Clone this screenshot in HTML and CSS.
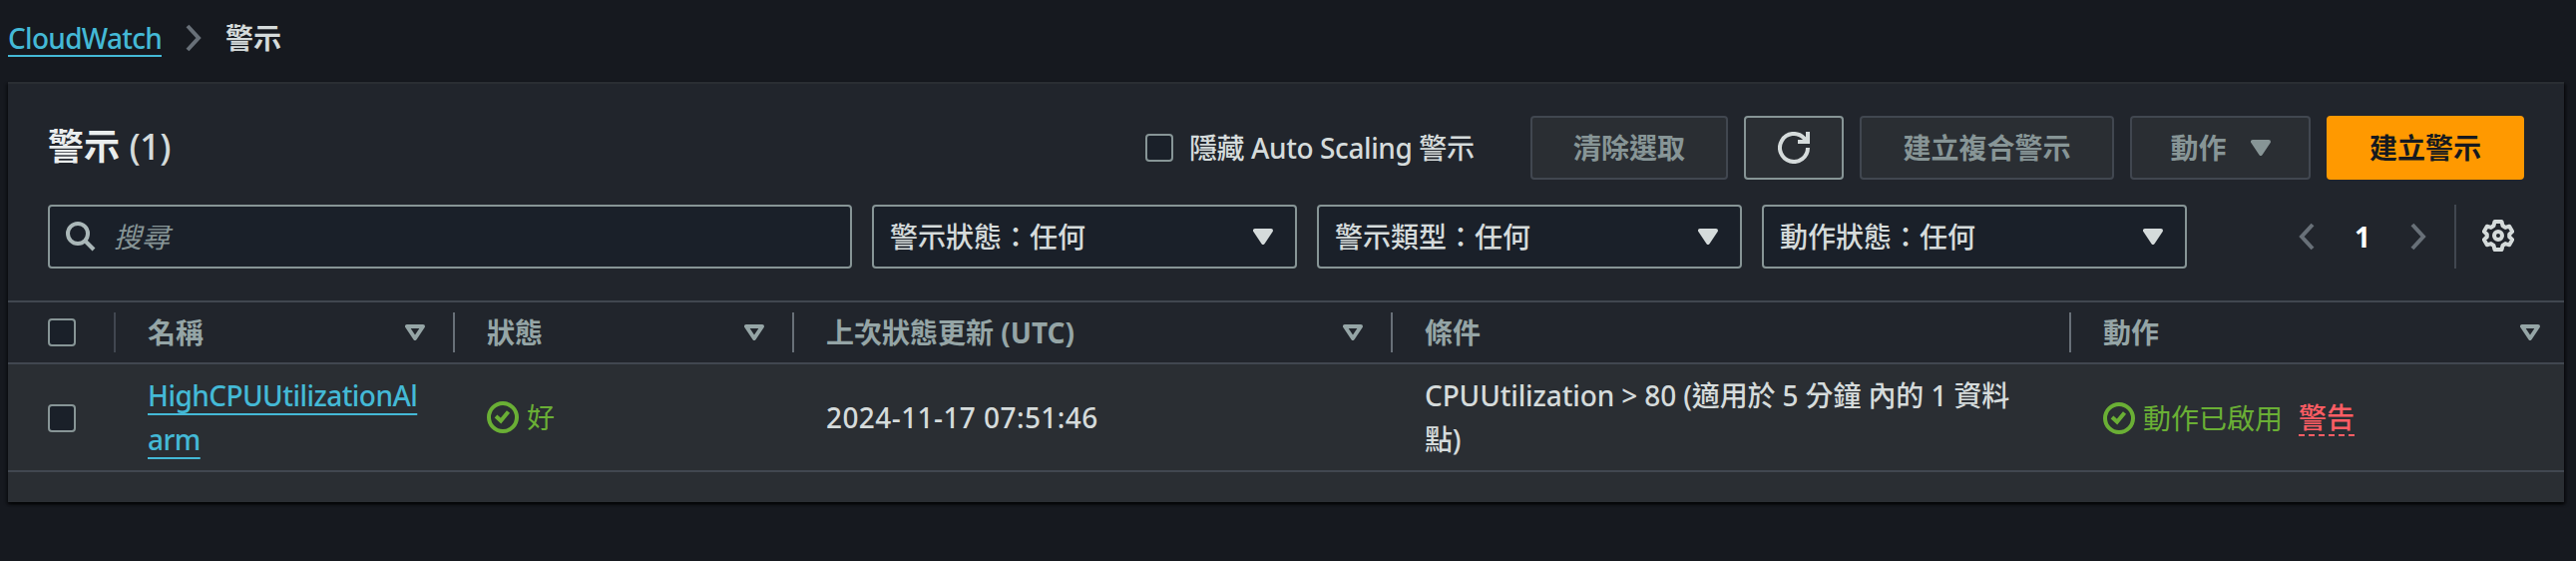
FILE: index.html
```html
<!DOCTYPE html>
<html lang="zh-Hant">
<head>
<meta charset="utf-8">
<title>CloudWatch 警示</title>
<link rel="stylesheet" href="styles.css">
</head>
<body>
<nav class="breadcrumb">
  <a class="link crumb-link">CloudWatch</a>
  <svg class="crumb-sep" width="16" height="28" viewBox="0 0 16 28"><path d="M2 2l11 12L2 26" fill="none" stroke="currentColor" stroke-width="4"/></svg>
  <span class="crumb-current">警示</span>
</nav>
<main class="panel">
  <header class="panel-head">
    <h1 class="title">警示 <span class="count">(1)</span></h1>
    <label class="hide-option"><span class="checkbox"></span><span class="hide-text">隱藏 Auto Scaling 警示</span></label>
    <div class="actions">
      <button class="btn disabled clear">清除選取</button>
      <button class="btn refresh" aria-label="重新整理"><svg width="32" height="32" viewBox="0 0 32 32" fill="none" stroke="currentColor" stroke-width="4"><path d="M30 16A14 14 0 1 1 26 6.200l3.500 3.800"/><path d="M30 0v10H20" /></svg></button>
      <button class="btn disabled composite">建立複合警示</button>
      <button class="btn disabled menu">動作<svg width="20" height="16" viewBox="0 0 20 16"><path d="M2 2h16l-8 12z" fill="currentColor" stroke="currentColor" stroke-width="4" stroke-linejoin="round"/></svg></button>
      <button class="btn primary">建立警示</button>
    </div>
  </header>
  <div class="filters">
    <div class="field search">
      <svg width="30" height="30" viewBox="0 0 30 30" fill="none" stroke="currentColor" stroke-width="4"><circle cx="12" cy="12" r="10"/><path d="M19 19l9 9"/></svg>
      <span class="placeholder">搜尋</span>
    </div>
    <div class="field select">警示狀態：任何<svg width="20" height="16" viewBox="0 0 20 16"><path d="M2 2h16l-8 12z" fill="currentColor" stroke="currentColor" stroke-width="4" stroke-linejoin="round"/></svg></div>
    <div class="field select">警示類型：任何<svg width="20" height="16" viewBox="0 0 20 16"><path d="M2 2h16l-8 12z" fill="currentColor" stroke="currentColor" stroke-width="4" stroke-linejoin="round"/></svg></div>
    <div class="field select">動作狀態：任何<svg width="20" height="16" viewBox="0 0 20 16"><path d="M2 2h16l-8 12z" fill="currentColor" stroke="currentColor" stroke-width="4" stroke-linejoin="round"/></svg></div>
    <div class="pager">
      <svg class="arrow" width="16" height="28" viewBox="0 0 16 28"><path d="M14 2L3 14l11 12" fill="none" stroke="currentColor" stroke-width="4"/></svg>
      <span class="page">1</span>
      <svg class="arrow" width="16" height="28" viewBox="0 0 16 28"><path d="M2 2l11 12L2 26" fill="none" stroke="currentColor" stroke-width="4"/></svg>
    </div>
    <div class="settings"><svg width="32" height="32" viewBox="0 0 32 32" fill="none" stroke="currentColor" stroke-width="4" stroke-linejoin="round"><path d="M12.500 2h7l1 4 2.700 1.900 4-1.200 3 5.200-3 2.900v2.400l3 2.900-3 5.200-4-1.200-2.700 1.900-1 4h-7l-1-4-2.700-1.900-4 1.200-3-5.200 3-2.900v-2.400l-3-2.900 3-5.200 4 1.200L11.500 6z"/><circle cx="16" cy="16" r="4"/></svg></div>
  </div>
  <table class="alarms">
    <colgroup><col class="c-check"><col class="c-name"><col class="c-state"><col class="c-time"><col class="c-cond"><col class="c-act"></colgroup>
    <thead>
      <tr>
        <th><div class="head first"><span class="checkbox"></span></div></th>
        <th><div class="head">名稱<svg width="20" height="16" viewBox="0 0 20 16"><path d="M2 2h16l-8 12z" fill="none" stroke="currentColor" stroke-width="4" stroke-linejoin="round"/></svg></div></th>
        <th><div class="head">狀態<svg width="20" height="16" viewBox="0 0 20 16"><path d="M2 2h16l-8 12z" fill="none" stroke="currentColor" stroke-width="4" stroke-linejoin="round"/></svg></div></th>
        <th><div class="head">上次狀態更新 (UTC)<svg width="20" height="16" viewBox="0 0 20 16"><path d="M2 2h16l-8 12z" fill="none" stroke="currentColor" stroke-width="4" stroke-linejoin="round"/></svg></div></th>
        <th><div class="head">條件</div></th>
        <th><div class="head last">動作<svg width="20" height="16" viewBox="0 0 20 16"><path d="M2 2h16l-8 12z" fill="none" stroke="currentColor" stroke-width="4" stroke-linejoin="round"/></svg></div></th>
      </tr>
    </thead>
    <tbody>
      <tr>
        <td class="pick"><span class="checkbox"></span></td>
        <td class="name"><a class="link">HighCPUUtilizationAl<br>arm</a></td>
        <td><div class="status"><svg width="32" height="32" viewBox="0 0 32 32" fill="none" stroke="currentColor" stroke-width="4"><circle cx="16" cy="16" r="14"/><path d="M9 15l5 4.500 7.500-9"/></svg><span>好</span></div></td>
        <td class="time">2024-11-17 07:51:46</td>
        <td class="cond">CPUUtilization &gt; 80 (適用於 5 分鐘 內的 1 資料<br>點)</td>
        <td><div class="status act"><svg width="32" height="32" viewBox="0 0 32 32" fill="none" stroke="currentColor" stroke-width="4"><circle cx="16" cy="16" r="14"/><path d="M9 15l5 4.500 7.500-9"/></svg><span>動作已啟用</span><span class="warn">警告</span></div></td>
      </tr>
    </tbody>
  </table>
</main>
</body>
</html>
```
FILE: styles.css
```css
* { box-sizing: border-box; }
body {
  margin: 0;
  height: 562px;
  padding: 0 12px 0 8px;
  overflow: hidden;
  background: #16191f;
  color: #d5dbdb;
  font: 500 28px/44px "Noto Sans", "Noto Sans CJK TC", sans-serif;
}
svg { display: block; flex: none; }
.link { color: #44b9d6; border-bottom: 2px solid #44b9d6; }
.breadcrumb { display: flex; align-items: center; height: 82px; padding-bottom: 6px; }
.crumb-link { height: 38px; line-height: 38px; width: 154px; white-space: nowrap; letter-spacing: -.7px; }
.crumb-sep { margin: 0 24px; color: #687078; }
.crumb-current { font-weight: 700; }
.panel {
  height: 421px;
  background: #2a2e33;
  border-top: 2px solid #2a2e33;
  box-shadow: 0 2px 2px rgba(0, 0, 0, .5), 2px 2px 3px rgba(0, 0, 0, .5), -2px 2px 3px rgba(0, 0, 0, .3);
}
.panel-head {
  display: flex;
  align-items: center;
  height: 121px;
  padding: 7px 40px 0;
  background: #21252c;
}
.title { margin: 0; padding-bottom: 2px; font-size: 36px; font-weight: 700; color: #eaeded; }
.count { font-weight: 500; color: #d5dbdb; letter-spacing: -.5px; }
.hide-option { display: flex; align-items: center; gap: 16px; margin-left: auto; margin-right: 56px; }
.hide-text { width: 286px; white-space: nowrap; letter-spacing: -.4px; }
.checkbox {
  display: block;
  width: 28px;
  height: 28px;
  border: 2px solid #879596;
  border-radius: 4px;
  background: #1a2029;
}
.actions { display: flex; gap: 16px; }
.btn {
  display: flex;
  align-items: center;
  justify-content: center;
  height: 64px;
  padding: 0;
  border: 2px solid #879596;
  border-radius: 4px;
  background: #2a2e33;
  color: #d5dbdb;
  font: inherit;
  font-weight: 700;
}
.disabled { color: #879596; border-color: #414750; }
.clear, .primary { width: 198px; }
.refresh { width: 100px; }
.composite { width: 255px; }
.menu { width: 181px; gap: 24px; }
.primary { background: #ff9900; border-color: #ff9900; color: #16191f; }
.filters {
  display: flex;
  align-items: flex-start;
  gap: 20px;
  height: 96px;
  padding: 0 40px;
  background: #21252c;
}
.field {
  display: flex;
  align-items: center;
  height: 64px;
  border: 2px solid #879596;
  border-radius: 4px;
  background: #1a2029;
}
.search { width: 806px; padding-left: 16px; color: #aab7b8; gap: 18px; }
.placeholder { color: #879596; font-style: italic; font-weight: 400; }
.select { width: 426px; padding: 0 22px 0 16px; justify-content: space-between; }
.pager { display: flex; align-items: center; justify-content: space-between; width: 128px; height: 64px; margin-left: auto; }
.arrow { color: #687078; }
.page { font-weight: 700; color: #fff; }
.settings {
  display: flex;
  align-items: center;
  justify-content: flex-end;
  width: 60px;
  height: 64px;
  margin: 0 10px 0 8px;
  padding-bottom: 2px;
  border-left: 2px solid #414750;
}
.alarms { width: 100%; table-layout: fixed; border-collapse: separate; border-spacing: 0; }
.c-check { width: 108px; }
.c-name, .c-state { width: 340px; }
.c-time { width: 600px; }
.c-cond { width: 680px; }
th {
  height: 64px;
  padding: 0;
  background: #21252c;
  border-top: 2px solid #414750;
  border-bottom: 2px solid #414750;
  color: #95a5a6;
  text-align: left;
}
.head {
  display: flex;
  align-items: center;
  justify-content: space-between;
  height: 40px;
  padding: 0 28px 0 32px;
  border-right: 2px solid #687078;
}
.first { padding-left: 40px; border-color: #414750; }
.last { padding-right: 24px; border-right: 0; }
td { height: 108px; padding: 0 0 0 32px; border-bottom: 2px solid #414750; vertical-align: middle; }
.pick { padding: 2px 0 0 40px; }
.name { letter-spacing: -.55px; }
.time { letter-spacing: .42px; }
.cond { letter-spacing: -.13px; }
.name .link { border: 0; text-decoration: underline; text-decoration-thickness: 2px; text-underline-offset: 7px; text-decoration-skip-ink: none; }
.status { display: flex; align-items: center; gap: 8px; color: #6aaf35; font-weight: 400; }
.act { padding-top: 2px; }
.warn { margin-left: 8px; height: 36px; line-height: 34px; font-weight: 500; color: #ff5d64; border-bottom: 2px dashed #ff5d64; }
```
